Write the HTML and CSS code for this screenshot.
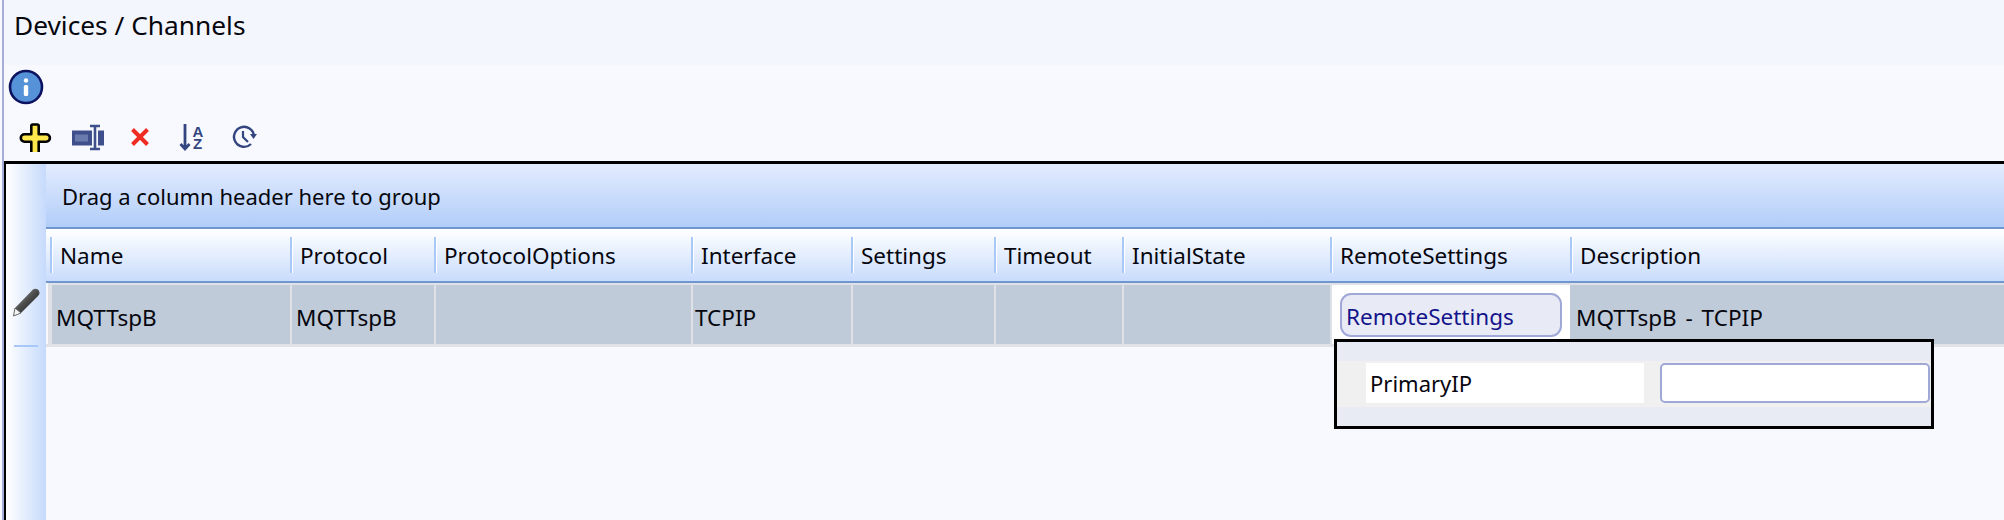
FILE: index.html
```html
<!DOCTYPE html>
<html lang="en">
<head>
<meta charset="utf-8">
<title>Devices / Channels</title>
<link rel="stylesheet" href="styles.css">
</head>
<body>
<div class="app">
  <header class="title">Devices / Channels</header>
  <div class="info-row">
    <svg class="info" viewBox="0 0 36 36" width="36" height="36"><circle cx="18" cy="18" r="16" fill="#5592d8" stroke="#0c1260" stroke-width="2.6"/><circle cx="18" cy="11.500" r="2.200" fill="#fff"/><rect x="15.800" y="16" width="4.400" height="11" rx="1.500" fill="#fff"/></svg>
  </div>
  <div class="toolbar">
    <svg class="tool" viewBox="0 0 34 30" width="34" height="30"><path d="M12.300 4a1.500 1.500 0 0 1 1.500-1.500h4.400a1.500 1.500 0 0 1 1.500 1.500v8.300h7.500a3.700 3.700 0 0 1 0 7.400h-7.500V33h-7.400V19.700H5.500a3.700 3.700 0 0 1 0-7.400h6.800z" fill="#fde74c" stroke="#000" stroke-width="2.600" stroke-linejoin="round"/></svg>
    <svg class="tool" viewBox="0 0 34 30" width="34" height="30"><path d="M1 8.500h20v15H1z" fill="#3f4f8c"/><path d="M4 12.500h13v7H4z" fill="#6a7aac"/><path d="M27 8.500h6v15h-6z" fill="#3f4f8c"/><path d="M19 4h10M19 27h10M24 4v23" stroke="#3f4f8c" stroke-width="2.600" fill="none"/></svg>
    <svg class="tool" viewBox="0 0 34 30" width="34" height="30"><path d="M9.500 7.500l15 15M24.500 7.500l-15 15" stroke="#ee2c22" stroke-width="4" fill="none"/></svg>
    <svg class="tool" viewBox="0 0 34 30" width="34" height="30"><path d="M10 2v25M5.500 22l4.500 5 4.500-5" stroke="#33457f" stroke-width="2.800" fill="none"/><text class="az" x="17.500" y="14.500">A</text><text class="az" x="18" y="26.500">Z</text></svg>
    <svg class="tool" viewBox="0 0 34 30" width="34" height="30"><path d="M27 14A10 10 0 1 0 24 22" stroke="#33457f" stroke-width="2.400" fill="none"/><path d="M16 9v6l5 5" stroke="#33457f" stroke-width="2.200" fill="none"/><path d="M23 12h7l-3.500 5z" fill="#33457f"/></svg>
  </div>
  <section class="grid">
    <aside class="side">
      <svg class="pencil" viewBox="0 0 30 34" width="30" height="34"><defs><linearGradient id="pen" x1="0" y1="0" x2="1" y2="1"><stop offset="0" stop-color="#a8a8a8"/><stop offset=".5" stop-color="#4a4a4a"/><stop offset="1" stop-color="#1c1c1c"/></linearGradient></defs><path d="M22 3.500c2-1.500 5-.5 6 1.500s.5 3.500-1 5L10 27 4 22z" fill="url(#pen)"/><path d="M4 22l6 5-7.500 3z" fill="#f4f4f4" stroke="#444" stroke-width=".8"/></svg>
      <span class="side-mark"></span>
    </aside>
    <div class="main">
      <div class="group-bar">Drag a column header here to group</div>
      <div class="cols head">
        <div class="hcell">Name</div>
        <div class="hcell">Protocol</div>
        <div class="hcell">ProtocolOptions</div>
        <div class="hcell">Interface</div>
        <div class="hcell">Settings</div>
        <div class="hcell">Timeout</div>
        <div class="hcell">InitialState</div>
        <div class="hcell">RemoteSettings</div>
        <div class="hcell">Description</div>
      </div>
      <div class="cols row">
        <div class="cell cell-first">MQTTspB</div>
        <div class="cell cell-wide">MQTTspB</div>
        <div class="cell"></div>
        <div class="cell cell-tight">TCPIP</div>
        <div class="cell"></div>
        <div class="cell"></div>
        <div class="cell"></div>
        <div class="cell cell-btn"><button class="remote" type="button">RemoteSettings</button></div>
        <div class="cell cell-last">MQTTspB - TCPIP</div>
      </div>
      <div class="popup">
        <div class="popup-row">
          <div class="popup-label">PrimaryIP</div>
          <input class="popup-input" type="text" aria-label="PrimaryIP">
        </div>
      </div>
    </div>
  </section>
</div>
</body>
</html>
```
FILE: styles.css
```css
* { box-sizing: border-box; }
html, body { margin: 0; height: 520px; overflow: hidden; }
body { background: #f8f9fe; font-family: "Noto Sans", "Open Sans", sans-serif; color: #06060e; }
.app { margin-left: 2px; border-left: 2px solid #a6aed8; height: 520px; display: flex; flex-direction: column; }
.title { height: 65px; background: #f3f6fc; font-size: 26.300px; line-height: 50px; padding-left: 10px; }
.info-row { height: 47px; padding: 4px 0 0 4px; }
.info { display: block; }
.toolbar { height: 49px; display: flex; align-items: flex-start; gap: 18px; padding: 10px 0 0 15px; }
.tool { display: block; flex: none; }
.az { font-family: "Liberation Sans", sans-serif; font-size: 15px; font-weight: 700; fill: #33457f; }
.grid { flex: 1; display: flex; border-top: 3px solid #000; border-left: 2px solid #000; min-height: 0; }
.side { width: 40px; flex: none; background: linear-gradient(90deg, #ffffff, #c6dafc); display: flex; flex-direction: column; align-items: center; padding-top: 122px; }
.pencil { display: block; }
.side-mark { display: block; width: 24px; height: 2px; background: #a8c8f8; margin-top: 25px; }
.main { flex: 1; position: relative; min-width: 0; }
.group-bar { height: 65px; background: linear-gradient(180deg, #e2ecfe, #b2cdf9); border-bottom: 2px solid #7096d0; font-size: 22px; line-height: 64px; padding-left: 16px; }
.cols { display: grid; }
.head { grid-template-columns: 4px 240px 144px 257px 160px 143px 128px 208px 240px 1fr; height: 54px; background: linear-gradient(180deg, #ffffff, #c8dcfc); border-bottom: 2px solid #7096d0; padding-top: 8px; padding-bottom: 8px; }
.head > :first-child, .row > :first-child { grid-column: 2; }
.hcell { height: 36px; font-size: 22.500px; line-height: 37px; padding-left: 8px; border-left: 2px solid #a8c8f8; box-shadow: inset 1px 0 0 #fff; white-space: nowrap; }
.row { grid-template-columns: 2px 242px 144px 257px 160px 143px 128px 208px 240px 1fr; height: 64px; border-bottom: 3px solid #e0e2e8; }
.cell { background: #bfcbd9; border-left: 2px solid #dfe1e6; border-top: 2px solid #dfe1e6; font-size: 22.500px; line-height: 65px; padding-left: 3px; white-space: nowrap; height: 61px; }
.cell-first { border-left-width: 4px; padding-left: 4px; }
.cell-wide { padding-left: 4px; }
.cell-tight { padding-left: 2px; }
.cell-btn { background: #fff; padding: 8px 8px 0 8px; }
.cell-last { border-left: 0; padding-left: 6px; word-spacing: 3px; }
.remote { display: block; width: 100%; height: 44px; border: 2px solid #a0a8d8; border-radius: 11px; background: #e8ebf5; font: inherit; font-size: 22.500px; line-height: 34px; color: #14148c; text-align: left; padding: 4px 0 0 4px; }
.popup { position: absolute; left: 1288px; top: 175px; width: 600px; height: 90px; border: 3px solid #000; background: #e8ebf3; padding-top: 19px; }
.popup-row { height: 46px; background: #f0f0f0; display: flex; align-items: flex-start; padding: 2px 0 0 29px; }
.popup-label { width: 278px; height: 40px; background: #fff; font-size: 22px; line-height: 40px; padding-left: 4px; }
.popup-input { display: block; margin-left: 16px; width: 270px; height: 40px; border: 2px solid #a0a8d8; border-radius: 5px; background: #fff; }
```
